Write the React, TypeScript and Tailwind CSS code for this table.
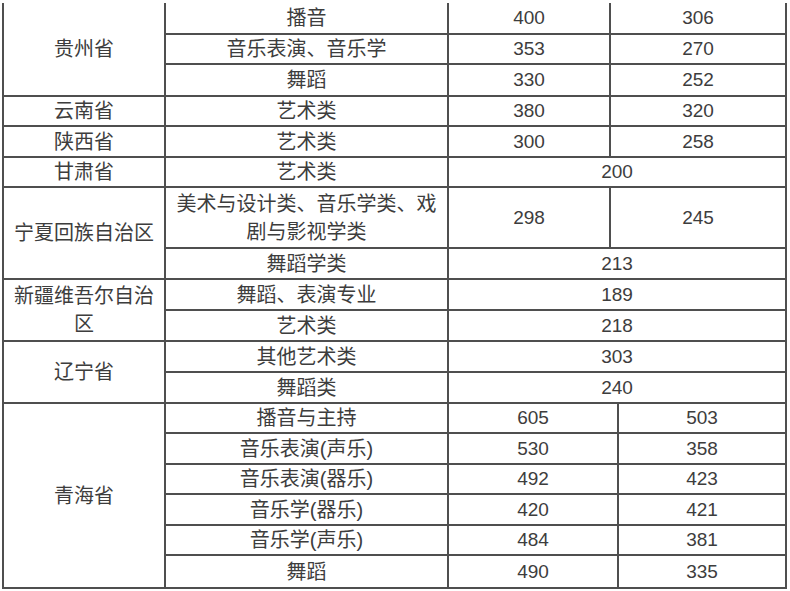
import React from 'react'

type Cell = { t: string; cs?: number; rs?: number; num?: boolean; wrap?: boolean }
type Row = { h: string; cells: Cell[] }

// columns: province | major | score A | gap | score B
const rows: Row[] = [
  { h: 'h-[32px]', cells: [{ t: '贵州省', rs: 3 }, { t: '播音' }, { t: '400', num: true }, { t: '306', cs: 2, num: true }] },
  { h: 'h-[30px]', cells: [{ t: '音乐表演、音乐学' }, { t: '353', num: true }, { t: '270', cs: 2, num: true }] },
  { h: 'h-[32px]', cells: [{ t: '舞蹈' }, { t: '330', num: true }, { t: '252', cs: 2, num: true }] },
  { h: 'h-[30px]', cells: [{ t: '云南省' }, { t: '艺术类' }, { t: '380', num: true }, { t: '320', cs: 2, num: true }] },
  { h: 'h-[31px]', cells: [{ t: '陕西省' }, { t: '艺术类' }, { t: '300', num: true }, { t: '258', cs: 2, num: true }] },
  { h: 'h-[30px]', cells: [{ t: '甘肃省' }, { t: '艺术类' }, { t: '200', cs: 3, num: true }] },
  { h: 'h-[61px]', cells: [{ t: '宁夏回族自治区', rs: 2 }, { t: '美术与设计类、音乐学类、戏剧与影视学类', wrap: true }, { t: '298', num: true }, { t: '245', cs: 2, num: true }] },
  { h: 'h-[31px]', cells: [{ t: '舞蹈学类' }, { t: '213', cs: 3, num: true }] },
  { h: 'h-[31px]', cells: [{ t: '新疆维吾尔自治区', rs: 2, wrap: true }, { t: '舞蹈、表演专业' }, { t: '189', cs: 3, num: true }] },
  { h: 'h-[31px]', cells: [{ t: '艺术类' }, { t: '218', cs: 3, num: true }] },
  { h: 'h-[31px]', cells: [{ t: '辽宁省', rs: 2 }, { t: '其他艺术类' }, { t: '303', cs: 3, num: true }] },
  { h: 'h-[31px]', cells: [{ t: '舞蹈类' }, { t: '240', cs: 3, num: true }] },
  { h: 'h-[30px]', cells: [{ t: '青海省', rs: 6 }, { t: '播音与主持' }, { t: '605', cs: 2, num: true }, { t: '503', num: true }] },
  { h: 'h-[31px]', cells: [{ t: '音乐表演(声乐)' }, { t: '530', cs: 2, num: true }, { t: '358', num: true }] },
  { h: 'h-[30px]', cells: [{ t: '音乐表演(器乐)' }, { t: '492', cs: 2, num: true }, { t: '423', num: true }] },
  { h: 'h-[31px]', cells: [{ t: '音乐学(器乐)' }, { t: '420', cs: 2, num: true }, { t: '421', num: true }] },
  { h: 'h-[30px]', cells: [{ t: '音乐学(声乐)' }, { t: '484', cs: 2, num: true }, { t: '381', num: true }] },
  { h: 'h-[33px]', cells: [{ t: '舞蹈' }, { t: '490', cs: 2, num: true }, { t: '335', num: true }] },
]

export default function App() {
  return (
    <div className="w-[790px] h-[591px] bg-white pt-[3px] pl-[2px] overflow-hidden">
      <table
        className="table-fixed border-separate border-spacing-0 border-l-2 border-[#4f4f4f] text-[#3d3d3d] w-[785px]"
        style={{ fontFamily: '"Liberation Sans", "Noto Sans CJK SC", sans-serif' }}
      >
        <colgroup>
          <col className="w-[162px]" />
          <col className="w-[283px]" />
          <col className="w-[162px]" />
          <col className="w-[8px]" />
          <col className="w-[168px]" />
        </colgroup>
        <tbody>
          {rows.map((r, i) => (
            <tr key={i} className={r.h}>
              {r.cells.map((c, j) => (
                <td
                  key={j}
                  colSpan={c.cs}
                  rowSpan={c.rs}
                  className={`p-0 px-1 text-center align-middle border-r-2 border-b-2 border-[#4f4f4f] ${
                    c.num ? 'text-[19px]' : 'text-[20px]'
                  } ${c.wrap ? 'leading-[28px]' : 'leading-[24px]'}`}
                >
                  {c.t}
                </td>
              ))}
            </tr>
          ))}
        </tbody>
      </table>
    </div>
  )
}
